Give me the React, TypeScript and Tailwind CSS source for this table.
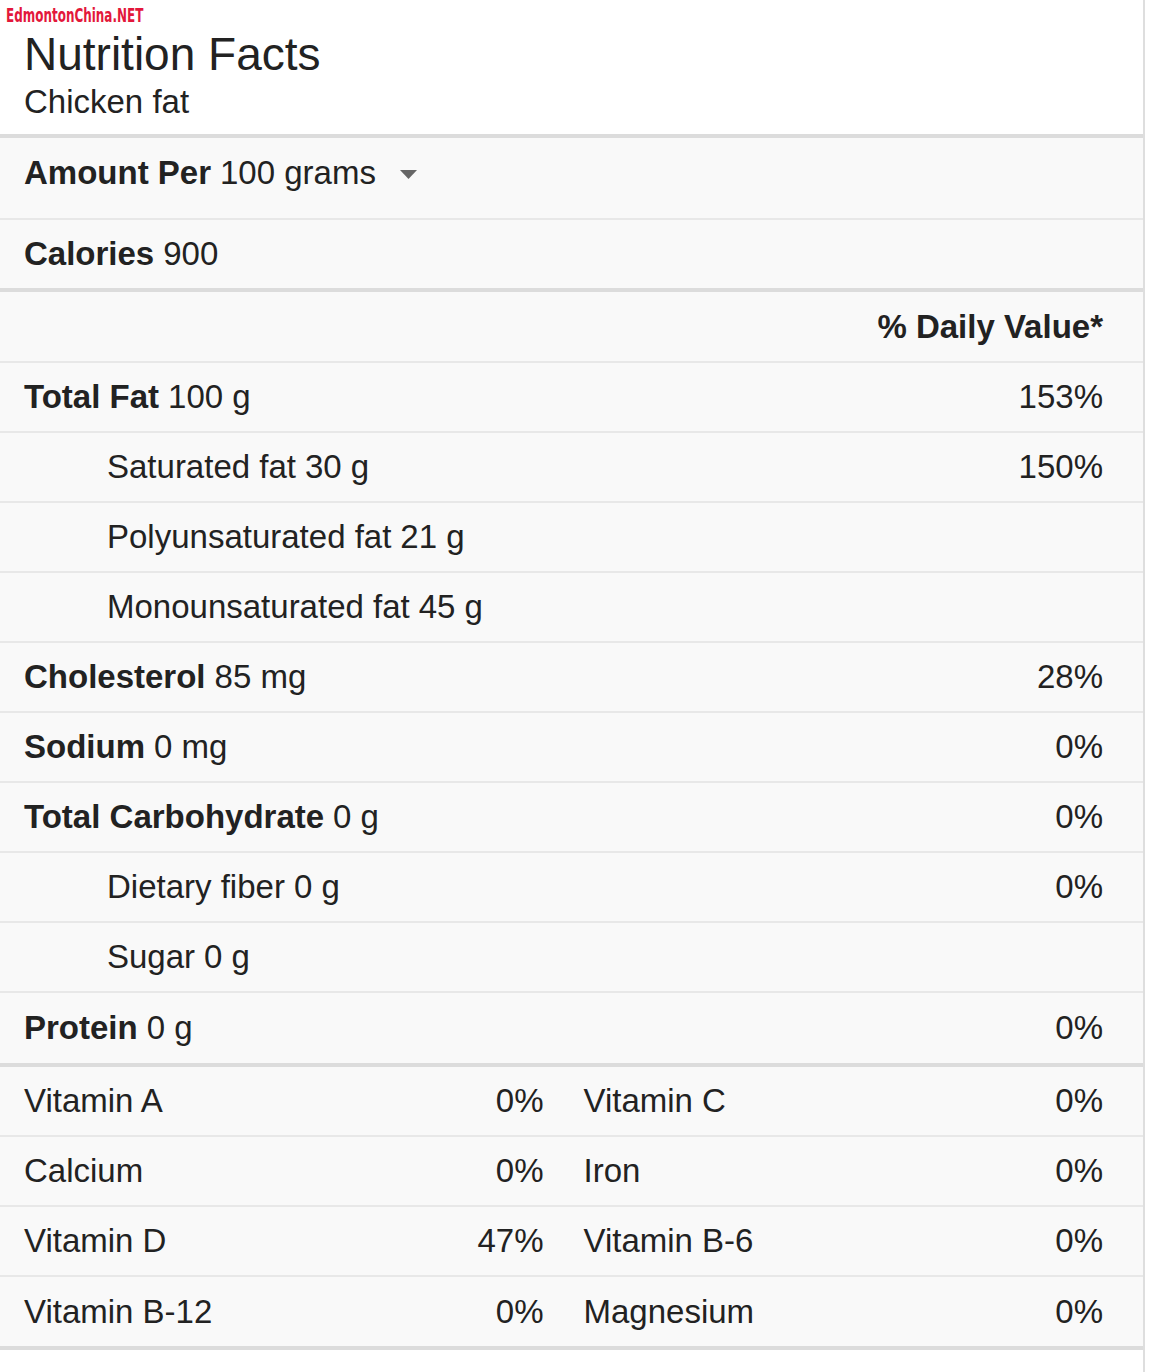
import React from "react";

type Row = {
  label: string;
  amount: string;
  dv?: string;
  bold?: boolean;
  thick?: boolean;
};

const rows: Row[] = [
  { label: "Total Fat", amount: "100 g", dv: "153%", bold: true },
  { label: "Saturated fat", amount: "30 g", dv: "150%" },
  { label: "Polyunsaturated fat", amount: "21 g" },
  { label: "Monounsaturated fat", amount: "45 g" },
  { label: "Cholesterol", amount: "85 mg", dv: "28%", bold: true },
  { label: "Sodium", amount: "0 mg", dv: "0%", bold: true },
  { label: "Total Carbohydrate", amount: "0 g", dv: "0%", bold: true },
  { label: "Dietary fiber", amount: "0 g", dv: "0%" },
  { label: "Sugar", amount: "0 g" },
  { label: "Protein", amount: "0 g", dv: "0%", bold: true, thick: true },
];

const vitamins: [string, string, string, string][] = [
  ["Vitamin A", "0%", "Vitamin C", "0%"],
  ["Calcium", "0%", "Iron", "0%"],
  ["Vitamin D", "47%", "Vitamin B-6", "0%"],
  ["Vitamin B-12", "0%", "Magnesium", "0%"],
];

export default function App() {
  return (
    <div
      className="min-h-[1372px] w-[1170px] bg-white text-[#222]"
      style={{ fontFamily: '"Liberation Sans", Arial, sans-serif' }}
    >
      <div className="w-[1145px] min-h-[1372px] border-r-2 border-[#dedede]">
        {/* header */}
        <div className="h-[134px] bg-white relative">
          <div
            className="absolute left-[6px] top-[5px] origin-left scale-x-[0.665] text-[20px] font-bold leading-none text-[#e3173b] whitespace-nowrap"
            style={{ fontFamily: '"DejaVu Sans Condensed", "Liberation Sans Narrow", sans-serif' }}
          >
            EdmontonChina.NET
          </div>
          <div className="pl-6 pt-[28px]">
            <div className="text-[46px] leading-[52px]">Nutrition Facts</div>
            <div className="text-[33px] leading-[38px] mt-[3px]">Chicken fat</div>
          </div>
        </div>

        <div className="bg-[#f9f9f9]">
          {/* amount per */}
          <div className="h-[86px] border-t-4 border-b-2 border-t-[#dcdcdc] border-b-[#e8e8e8] flex items-center pl-6 pb-[10px] text-[33px]">
            <span className="font-bold">Amount Per</span>
            <span className="ml-[9px]">100 grams</span>
            <svg className="ml-[24px] mt-[2px]" width="17" height="9" viewBox="0 0 17 9">
              <path d="M0 0 L17 0 L8.5 9 Z" fill="#666" />
            </svg>
          </div>

          {/* calories */}
          <div className="h-[72px] border-b-4 border-[#dcdcdc] flex items-center pl-6 text-[33px]">
            <span className="font-bold">Calories</span>
            <span className="ml-[9px]">900</span>
          </div>

          {/* daily value header */}
          <div className="h-[71px] border-b-2 border-[#e8e8e8] flex items-center justify-end pr-10 text-[33px] font-bold">
            % Daily Value*
          </div>

          {rows.map((r) => (
            <div
              key={r.label}
              className={
                "flex items-center justify-between pr-10 text-[33px] " +
                (r.thick ? "h-[74px] border-b-4 border-[#dcdcdc] " : "h-[70px] border-b-2 border-[#e8e8e8] ") +
                (r.bold ? "pl-6" : "pl-[107px]")
              }
            >
              <div>
                <span className={r.bold ? "font-bold" : ""}>{r.label}</span>
                <span className="ml-[9px]">{r.amount}</span>
              </div>
              <div>{r.dv}</div>
            </div>
          ))}

          {vitamins.map((v, i) => (
            <div
              key={v[0]}
              className={
                "grid grid-cols-2 gap-10 items-center pl-6 pr-10 text-[33px] " +
                (i === vitamins.length - 1
                  ? "h-[73px] border-b-4 border-[#dcdcdc]"
                  : "h-[70px] border-b-2 border-[#e8e8e8]")
              }
            >
              <div className="flex justify-between">
                <span>{v[0]}</span>
                <span>{v[1]}</span>
              </div>
              <div className="flex justify-between">
                <span>{v[2]}</span>
                <span>{v[3]}</span>
              </div>
            </div>
          ))}
        </div>
      </div>
    </div>
  );
}
